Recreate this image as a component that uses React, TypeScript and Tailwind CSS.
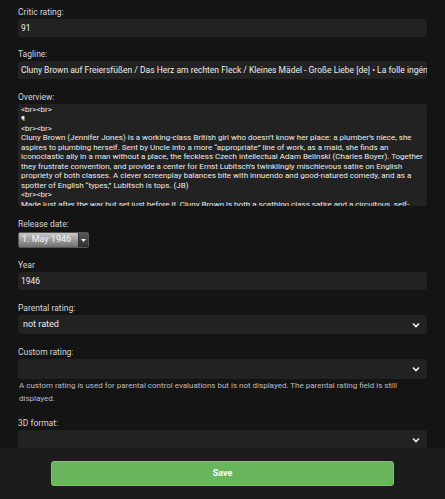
import React from 'react';

const Label: React.FC<{ children: React.ReactNode; className?: string }> = ({ children, className }) => (
    <div className={`h-[13px] text-[8.5px] leading-[13px] text-[#d4d4d4] ${className ?? ''}`}>{children}</div>
);

const Chevron = () => (
    <svg width="8" height="6" viewBox="0 0 8 6" className="shrink-0">
        <path d="M1 1.5 L4 4.5 L7 1.5" fill="none" stroke="#f0f0f0" strokeWidth="1.6" />
    </svg>
);

const TextField: React.FC<{ value: string }> = ({ value }) => (
    <div className="h-[18px] rounded-[3px] bg-[#222222] px-[3px] text-[8.5px] leading-[18px] text-[#ececec] whitespace-nowrap overflow-hidden">
        {value}
    </div>
);

const SelectField: React.FC<{ value?: string; h: string }> = ({ value, h }) => (
    <div className={`${h} rounded-[3px] bg-[#222222] pl-[5px] pr-[7px] flex items-center justify-between text-[9px] text-[#ececec]`}>
        <span>{value}</span>
        <Chevron />
    </div>
);

const overview = `<br><br>
¶
<br><br>
Cluny Brown (Jennifer Jones) is a working-class British girl who doesn’t know her place: a plumber’s niece, she aspires to plumbing herself. Sent by Uncle into a more “appropriate” line of work, as a maid, she finds an iconoclastic ally in a man without a place, the feckless Czech intellectual Adam Belinski (Charles Boyer). Together they frustrate convention, and provide a center for Ernst Lubitsch’s twinklingly mischievous satire on English propriety of both classes. A clever screenplay balances bite with innuendo and good-natured comedy, and as a spotter of English “types,” Lubitsch is tops. (JB)
<br><br>
Made just after the war but set just before it, Cluny Brown is both a scathing class satire and a circuitous, self-deprecating romance.`;

export default function App() {
    return (
        <div className="h-[499px] w-[445px] bg-[#141414] flex flex-col overflow-hidden" style={{ fontFamily: 'Roboto, "Noto Sans", sans-serif' }}>
            <div className="flex-1 overflow-hidden px-[18px] pt-[6px]">
                <Label>Critic rating:</Label>
                <TextField value="91" />

                <Label className="mt-[11px]">Tagline:</Label>
                <TextField value="Cluny Brown auf Freiersfüßen / Das Herz am rechten Fleck / Kleines Mädel - Große Liebe [de] • La folle ingénue [fr]" />

                <Label className="mt-[12px]">Overview:</Label>
                <div className="h-[102px] rounded-[2px] bg-[#222222] px-[3px] pt-[0.5px] overflow-hidden text-[8px] leading-[9.5px] text-[#ececec] whitespace-pre-line">
                    {overview}
                </div>

                <Label className="mt-[12px]">Release date:</Label>
                <div className="mt-px flex h-[16px] w-[71px] rounded-[2px] overflow-hidden border border-[#555]">
                    <div className="flex-1 bg-gradient-to-b from-[#c8c8c8] via-[#9c9c9c] to-[#707070] pl-[3px] text-[9px] leading-[13px] text-[#f4f4f4]">
                        1. May 1946
                    </div>
                    <div className="w-[10px] border-l border-[#333] bg-gradient-to-b from-[#5a5a5a] to-[#2e2e2e] flex items-center justify-center">
                        <svg width="5" height="3" viewBox="0 0 5 3">
                            <path d="M0 0 L5 0 L2.5 3 Z" fill="#f0f0f0" />
                        </svg>
                    </div>
                </div>

                <Label className="mt-[11px]">Year</Label>
                <TextField value="1946" />

                <Label className="mt-[12px]">Parental rating:</Label>
                <SelectField value="not rated" h="h-[19px]" />

                <Label className="mt-[12px]">Custom rating:</Label>
                <SelectField h="h-[20px]" />
                <div className="pl-px text-[8px] leading-[13px] text-[#bdbdbd]">
                    A custom rating is used for parental control evaluations but is not displayed. The parental rating field is still displayed.
                </div>

                <Label className="mt-[12px]">3D format:</Label>
                <SelectField h="h-[20px]" />
            </div>
            <div className="h-[51px] shrink-0 bg-[#1c1c1c] flex justify-center pt-[13px]">
                <button className="h-[25px] w-[343px] rounded-[3px] bg-[#69b55b] border border-[#7cc66e] text-[9px] font-bold text-white">
                    Save
                </button>
            </div>
        </div>
    );
}
